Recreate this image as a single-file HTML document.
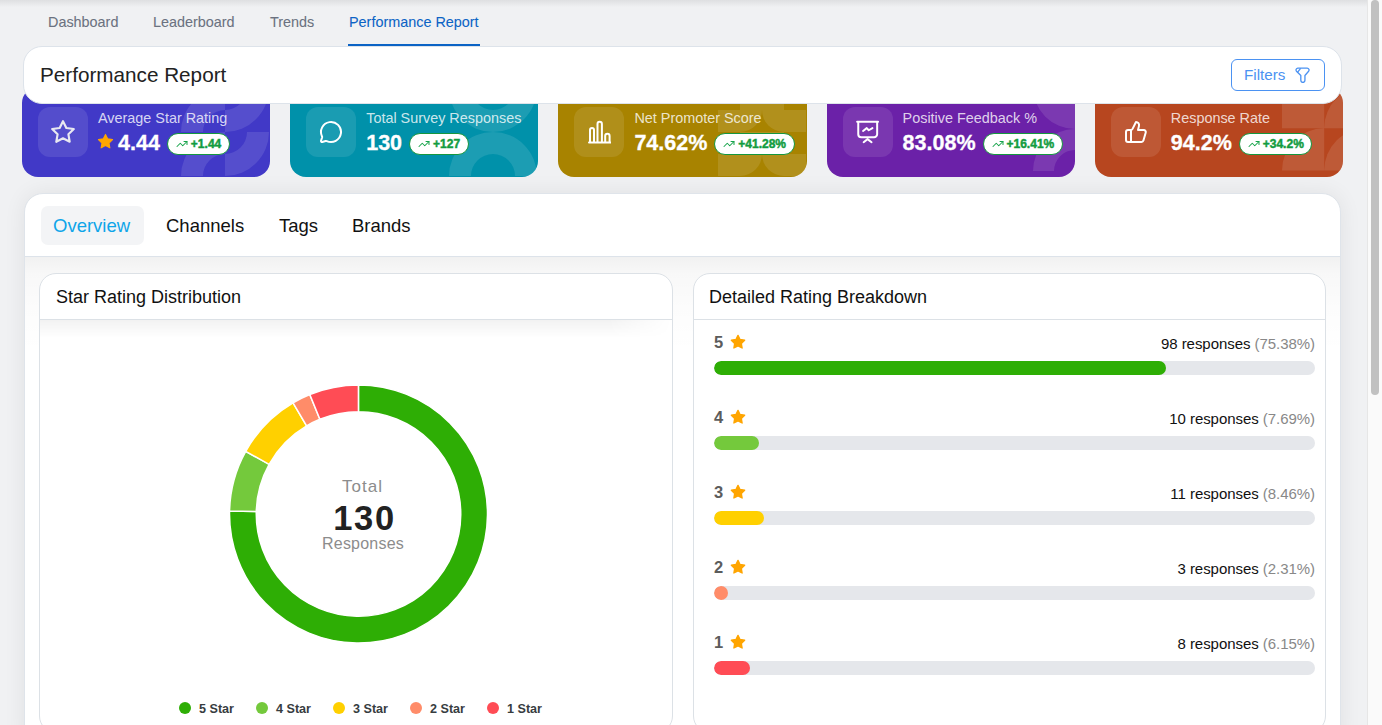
<!DOCTYPE html>
<html><head><meta charset="utf-8">
<style>
*{box-sizing:border-box;margin:0;padding:0}
html,body{width:1382px;height:725px;overflow:hidden}
body{background:#f0f1f3;font-family:"Liberation Sans",sans-serif;position:relative;color:#1f2937}
.abs{position:absolute}
.topshadow{left:0;top:0;width:1367px;height:7px;background:linear-gradient(#dedfe1,rgba(240,241,243,0))}
.nav{top:12px;font-size:14.4px;color:#6b7280;white-space:nowrap;line-height:20px;-webkit-text-stroke:.08px currentColor}
.nav.active{color:#0b63c5}
.underline{left:348px;top:44px;width:132px;height:2px;background:#0b63c5}
.hdr{left:23px;top:46px;width:1319px;height:58px;background:#fff;border:1px solid #dde3ea;border-radius:19px;z-index:5}
.hdr h1{position:absolute;left:16px;top:15.6px;font-size:20.7px;font-weight:400;color:#222;line-height:24px;white-space:nowrap}
.filters{left:1207px;top:12px;width:94px;height:32px;border:1px solid #4b92f2;border-radius:6px;color:#4b92f2;font-size:15.2px;line-height:30px;padding-left:12px}
.filters svg{position:absolute;left:63.2px;top:7px}
.card{top:87px;width:248.2px;height:90px;border-radius:16px;overflow:hidden;z-index:1}
.card .pat{position:absolute;right:1px;bottom:1px}
.ibox{position:absolute;left:16px;top:20px;width:50px;height:50px;border-radius:12px;background:rgba(255,255,255,.1)}
.ibox svg{position:absolute;left:13px;top:13px}
.lbl{position:absolute;left:76px;top:22.5px;font-size:14.4px;letter-spacing:0;line-height:17px;color:rgba(255,255,255,.8);white-space:nowrap}
.val{position:absolute;left:76px;top:44px;height:24px;display:flex;align-items:center;white-space:nowrap}
.val b{font-size:21.5px;color:#fff;line-height:24px;font-weight:700;-webkit-text-stroke:.3px #fff}
.badge{margin-left:7px;margin-top:2px;height:22px;border:1px solid #15973f;border-radius:11px;background:#fff;color:#129c3f;font-weight:700;font-size:12px;display:flex;align-items:center;padding:0 7.5px 0 8px;-webkit-text-stroke:.45px #129c3f}
.badge svg{margin-right:3px}
.ov{left:24px;top:193px;width:1317px;height:560px;background:#fff;border:1px solid #dfe4ea;border-radius:19px;box-shadow:0 0 22px rgba(0,0,0,.07)}
.tabbar{position:absolute;left:0;top:0;width:100%;height:63px;border-bottom:1px solid #dde3ea;border-radius:18px 18px 0 0}
.tabsh{position:absolute;left:0;top:63px;width:100%;height:95px;background:linear-gradient(rgba(0,0,0,.055),rgba(0,0,0,.028) 18%,rgba(0,0,0,.01) 55%,rgba(0,0,0,0))}
.hsh{position:absolute;left:0;top:46px;width:100%;height:18px;background:linear-gradient(rgba(0,0,0,.05),rgba(0,0,0,0));-webkit-mask-image:linear-gradient(to right,#000 90%,transparent)}
.tab{position:absolute;top:12px;height:39px;font-size:18.5px;line-height:39px;color:#111;white-space:nowrap}
.tab.on{left:16px;width:103px;background:#f3f4f6;border-radius:7px;color:#0ea5e9;padding-left:12px}
.pane{position:absolute;top:273px;width:633px;height:460px;background:#fff;border:1px solid #dce1e6;border-radius:17px;}
.pane h2{position:absolute;left:15px;top:12px;font-size:18px;font-weight:400;color:#111;line-height:22px;white-space:nowrap}
.pane .hb{position:absolute;left:0;top:45px;width:100%;height:1px;background:#dce1e6}
.row{position:absolute;left:20px;width:601px}
.row .n{position:absolute;left:0;top:-3px;font-size:16.5px;font-weight:700;color:#5c5c5c;line-height:20px}
.row svg.st{position:absolute;left:16px;top:-1px}
.row .rt{position:absolute;right:0;top:0;font-size:15px;line-height:18px;color:#111;letter-spacing:-.05px;white-space:nowrap}
.row .rt span{color:#888}
.track{position:absolute;left:0;top:26px;width:601px;height:14px;border-radius:7px;background:#e5e7eb;overflow:hidden}
.fill{position:absolute;left:0;top:0;height:14px;border-radius:7px}
.leg{position:absolute;top:701px;font-size:12.6px;font-weight:700;color:#373d3f;line-height:16px;white-space:nowrap}
.leg i{position:absolute;left:-20px;top:1px;width:12px;height:12px;border-radius:6px}
.sb{left:1367px;top:0;width:15px;height:725px;background:#fafafa;border-left:1px solid #e6e6e6;z-index:10}
.thumb{left:1371px;top:0;width:8px;height:395px;border-radius:4px;background:#c1c1c1;z-index:11}
</style></head><body>
<div class="abs topshadow"></div>
<div class="abs nav" style="left:48px">Dashboard</div>
<div class="abs nav" style="left:153px">Leaderboard</div>
<div class="abs nav" style="left:270px">Trends</div>
<div class="abs nav active" style="left:349px">Performance Report</div>
<div class="abs underline"></div>

<div class="abs hdr">
  <h1>Performance Report</h1>
  <div class="abs filters">Filters<svg width="15" height="16" viewBox="0 0 16 17" preserveAspectRatio="none" fill="none" stroke="#4b92f2" stroke-width="1.4" stroke-linejoin="round"><path d="M3 1.2h10a2 2 0 0 1 1.5 3.3L10.6 9v5.2a2.2 2.2 0 0 1-4.4 0V9L1.6 4.5A2 2 0 0 1 3 1.2Z"/><path d="M6 1.4L2.4 6"/></svg></div>
</div>

<!-- card 1 -->
<div class="abs card" style="left:22px;background:#4139c7">
  <svg class="pat" width="88" height="88" viewBox="0 0 88 88" fill="rgba(255,255,255,.11)"><path d="M0 44A44 44 0 0 1 44 0L44 22A22 22 0 0 0 22 44Z"/><path d="M44 22L44 44A44 44 0 0 0 88 0L66 0A22 22 0 0 1 44 22Z"/><path d="M0 88A44 44 0 0 1 44 44L44 66A22 22 0 0 0 22 88Z"/><path d="M44 66L44 88A44 44 0 0 0 88 44L66 44A22 22 0 0 1 44 66Z"/></svg>
  <div class="ibox"><svg style="left:12.2px;top:12.4px" width="26" height="26" viewBox="0 0 24 24" fill="none" stroke="#e8e8f0" stroke-width="2" stroke-linejoin="round"><path d="M12 2l3.09 6.26L22 9.27l-5 4.87 1.18 6.88L12 17.77l-6.18 3.25L7 14.14 2 9.27l6.91-1.01L12 2z"/></svg></div>
  <div class="lbl">Average Star Rating</div>
  <div class="val"><svg width="17" height="17" viewBox="0 0 24 24" style="margin-right:4px;margin-left:-1px;position:relative;top:-1.5px"><path fill="#ffa500" stroke="#ffa500" stroke-width="1.5" stroke-linejoin="round" d="M12 2l3.09 6.26L22 9.27l-5 4.87 1.18 6.88L12 17.77l-6.18 3.25L7 14.14 2 9.27l6.91-1.01L12 2z"/></svg><b>4.44</b><span class="badge"><svg width="12" height="12" viewBox="0 0 24 24" fill="none" stroke="#16a34a" stroke-width="2.05" stroke-linecap="round" stroke-linejoin="round"><path d="M22 7l-8.5 8.5-5-5L2 17"/><path d="M16 7h6v6"/></svg>+1.44</span></div>
</div>
<!-- card 2 -->
<div class="abs card" style="left:290.2px;background:#0091aa">
  <svg class="pat" width="88" height="88" viewBox="0 0 88 88" fill="rgba(255,255,255,.11)"><path d="M0 0A44 44 0 0 0 88 0L66 0A22 22 0 0 1 22 0Z"/><path d="M0 88A44 44 0 0 1 88 88L66 88A22 22 0 0 0 22 88Z"/></svg>
  <div class="ibox"><svg width="24" height="24" viewBox="0 0 24 24" fill="none" stroke="#fff" stroke-width="2" stroke-linecap="round" stroke-linejoin="round"><path d="M2.992 16.342a2 2 0 0 1 .094 1.167l-1.065 3.29a1 1 0 0 0 1.236 1.168l3.413-.998a2 2 0 0 1 1.099.092 10 10 0 1 0-4.777-4.719"/></svg></div>
  <div class="lbl">Total Survey Responses</div>
  <div class="val"><b>130</b><span class="badge"><svg width="12" height="12" viewBox="0 0 24 24" fill="none" stroke="#16a34a" stroke-width="2.05" stroke-linecap="round" stroke-linejoin="round"><path d="M22 7l-8.5 8.5-5-5L2 17"/><path d="M16 7h6v6"/></svg>+127</span></div>
</div>
<!-- card 3 -->
<div class="abs card" style="left:558.4px;background:#a88300">
  <svg class="pat" width="88" height="88" viewBox="0 0 88 88" fill="rgba(255,255,255,.11)"><path d="M22 0h44v22H22Z"/><path d="M0 22h22v22H0Z"/><path d="M66 22h22v22H66Z"/><path d="M22 22h22A22 22 0 0 1 22 44Z"/><path d="M66 22v22A22 22 0 0 1 44 22Z"/><path d="M22 44h44v22H22Z"/><path d="M0 66h22v22H0Z"/><path d="M66 66h22v22H66Z"/><path d="M22 66h22A22 22 0 0 1 22 88Z"/><path d="M66 66v22A22 22 0 0 1 44 66Z"/></svg>
  <div class="ibox"><svg width="24" height="24" viewBox="0 0 24 24" fill="none" stroke="#fff" stroke-width="2" stroke-linecap="round" stroke-linejoin="round"><path d="M3 22V10a2 2 0 0 1 4 0v12"/><path d="M10.5 22V4a2.2 2.2 0 0 1 4.4 0v18"/><path d="M18.2 22v-6a2.2 2.2 0 0 1 4.4 0v6"/><path d="M2 22.6h21.5"/></svg></div>
  <div class="lbl">Net Promoter Score</div>
  <div class="val"><b>74.62%</b><span class="badge"><svg width="12" height="12" viewBox="0 0 24 24" fill="none" stroke="#16a34a" stroke-width="2.05" stroke-linecap="round" stroke-linejoin="round"><path d="M22 7l-8.5 8.5-5-5L2 17"/><path d="M16 7h6v6"/></svg>+41.28%</span></div>
</div>
<!-- card 4 -->
<div class="abs card" style="left:826.6px;background:#6b21a8">
  <svg class="pat" style="right:0;bottom:6px" width="84" height="84" viewBox="0 0 84 84" fill="rgba(255,255,255,.11)"><path d="M84 0V42A42 42 0 0 1 42 0Z"/><path d="M42 84A42 42 0 0 1 84 42V63A21 21 0 0 0 63 84Z"/></svg>
  <div class="ibox"><svg width="24" height="24" viewBox="0 0 24 24" fill="none" stroke="#fff" stroke-width="2" stroke-linecap="round" stroke-linejoin="round"><path d="M1.15 1.85h20.9"/><path d="M2.25 2v12.15a3 3 0 0 0 3 3h12.9a3 3 0 0 0 3-3V2"/><path d="M7.65 22.25l3.9-3.1 4 3.1"/><path d="M7.05 11l3.7-2.85 2 2.1 3.7-2.1"/></svg></div>
  <div class="lbl">Positive Feedback %</div>
  <div class="val"><b>83.08%</b><span class="badge"><svg width="12" height="12" viewBox="0 0 24 24" fill="none" stroke="#16a34a" stroke-width="2.05" stroke-linecap="round" stroke-linejoin="round"><path d="M22 7l-8.5 8.5-5-5L2 17"/><path d="M16 7h6v6"/></svg>+16.41%</span></div>
</div>
<!-- card 5 -->
<div class="abs card" style="left:1094.8px;background:#b7461f">
  <svg class="pat" style="right:-23.2px;bottom:6.4px" width="84.4" height="84.4" viewBox="0 0 84 84" fill="rgba(255,255,255,.11)"><path d="M0 0h42v42H0Z"/><path d="M42 42A42 42 0 0 1 84 0V42Z"/><path d="M0 84A42 42 0 0 1 42 42V84Z"/><path d="M42 84A42 42 0 0 1 84 42V84Z"/></svg>
  <div class="ibox"><svg width="24" height="24" viewBox="0 0 24 24" fill="none" stroke="#fff" stroke-width="2" stroke-linecap="round" stroke-linejoin="round"><path d="M7 10v12"/><path d="M15 5.88L14 10h5.83a2 2 0 0 1 1.92 2.56l-2.33 8A2 2 0 0 1 17.5 22H4a2 2 0 0 1-2-2v-8a2 2 0 0 1 2-2h2.76a2 2 0 0 0 1.79-1.11L12 2a3.13 3.13 0 0 1 3 3.88Z"/></svg></div>
  <div class="lbl">Response Rate</div>
  <div class="val"><b>94.2%</b><span class="badge"><svg width="12" height="12" viewBox="0 0 24 24" fill="none" stroke="#16a34a" stroke-width="2.05" stroke-linecap="round" stroke-linejoin="round"><path d="M22 7l-8.5 8.5-5-5L2 17"/><path d="M16 7h6v6"/></svg>+34.2%</span></div>
</div>

<div class="abs ov">
  <div class="tabbar">
    <div class="tab on">Overview</div>
    <div class="tab" style="left:141px">Channels</div>
    <div class="tab" style="left:254px">Tags</div>
    <div class="tab" style="left:327px">Brands</div>
  </div>
  <div class="tabsh"></div>
</div>

<!-- left pane -->
<div class="pane" style="left:39px;width:634px">
  <h2 style="left:16px">Star Rating Distribution</h2>
  <div class="hb"></div>
  <div class="hsh"></div>
</div>
<svg class="abs" style="left:0;top:0;z-index:3" width="1382" height="725">
<path d="M358.50 385.00A129 129 0 1 1 229.54 510.92L256.28 511.56A102.25 102.25 0 1 0 358.50 411.75Z" fill="#2eae05" stroke="#fff" stroke-width="1.5"/>
<path d="M229.54 510.92A129 129 0 0 1 245.73 451.36L269.12 464.35A102.25 102.25 0 0 0 256.28 511.56Z" fill="#74c93c" stroke="#fff" stroke-width="1.5"/>
<path d="M245.73 451.36A129 129 0 0 1 293.04 402.84L306.62 425.89A102.25 102.25 0 0 0 269.12 464.35Z" fill="#ffd000" stroke="#fff" stroke-width="1.5"/>
<path d="M293.04 402.84A129 129 0 0 1 309.81 394.54L319.91 419.31A102.25 102.25 0 0 0 306.62 425.89Z" fill="#ff8c69" stroke="#fff" stroke-width="1.5"/>
<path d="M309.81 394.54A129 129 0 0 1 358.42 385.00L358.44 411.75A102.25 102.25 0 0 0 319.91 419.31Z" fill="#ff4c55" stroke="#fff" stroke-width="1.5"/>
<text x="362.5" y="492" text-anchor="middle" font-family="Liberation Sans" font-size="17" fill="#8c8c8c" letter-spacing="1">Total</text>
<text x="364.5" y="530" text-anchor="middle" font-family="Liberation Sans" font-size="34.5" font-weight="700" fill="#222" letter-spacing="1.6">130</text>
<text x="363" y="549" text-anchor="middle" font-family="Liberation Sans" font-size="16" fill="#8c8c8c" letter-spacing="0.22">Responses</text>
</svg>
<div class="leg" style="left:199px"><i style="background:#2eae05"></i>5 Star</div>
<div class="leg" style="left:276px"><i style="background:#74c93c"></i>4 Star</div>
<div class="leg" style="left:353px"><i style="background:#ffd000"></i>3 Star</div>
<div class="leg" style="left:430px"><i style="background:#ff8c69"></i>2 Star</div>
<div class="leg" style="left:507px"><i style="background:#ff4c55"></i>1 Star</div>

<!-- right pane -->
<div class="pane" style="left:693px">
  <h2>Detailed Rating Breakdown</h2>
  <div class="hb"></div>
  <div class="row" style="top:61px"><div class="n">5</div><svg class="st" width="16" height="16" viewBox="0 0 24 24"><path fill="#ffa500" stroke="#ffa500" stroke-width="2" stroke-linejoin="round" d="M12 2l3.09 6.26L22 9.27l-5 4.87 1.18 6.88L12 17.77l-6.18 3.25L7 14.14 2 9.27l6.91-1.01L12 2z"/></svg><div class="rt">98 responses <span>(75.38%)</span></div><div class="track"><div class="fill" style="width:452px;background:#2eae05"></div></div></div>
  <div class="row" style="top:136px"><div class="n">4</div><svg class="st" width="16" height="16" viewBox="0 0 24 24"><path fill="#ffa500" stroke="#ffa500" stroke-width="2" stroke-linejoin="round" d="M12 2l3.09 6.26L22 9.27l-5 4.87 1.18 6.88L12 17.77l-6.18 3.25L7 14.14 2 9.27l6.91-1.01L12 2z"/></svg><div class="rt">10 responses <span>(7.69%)</span></div><div class="track"><div class="fill" style="width:45px;background:#74c93c"></div></div></div>
  <div class="row" style="top:211px"><div class="n">3</div><svg class="st" width="16" height="16" viewBox="0 0 24 24"><path fill="#ffa500" stroke="#ffa500" stroke-width="2" stroke-linejoin="round" d="M12 2l3.09 6.26L22 9.27l-5 4.87 1.18 6.88L12 17.77l-6.18 3.25L7 14.14 2 9.27l6.91-1.01L12 2z"/></svg><div class="rt">11 responses <span>(8.46%)</span></div><div class="track"><div class="fill" style="width:50px;background:#ffd000"></div></div></div>
  <div class="row" style="top:286px"><div class="n">2</div><svg class="st" width="16" height="16" viewBox="0 0 24 24"><path fill="#ffa500" stroke="#ffa500" stroke-width="2" stroke-linejoin="round" d="M12 2l3.09 6.26L22 9.27l-5 4.87 1.18 6.88L12 17.77l-6.18 3.25L7 14.14 2 9.27l6.91-1.01L12 2z"/></svg><div class="rt">3 responses <span>(2.31%)</span></div><div class="track"><div class="fill" style="width:14px;background:#ff8c69"></div></div></div>
  <div class="row" style="top:361px"><div class="n">1</div><svg class="st" width="16" height="16" viewBox="0 0 24 24"><path fill="#ffa500" stroke="#ffa500" stroke-width="2" stroke-linejoin="round" d="M12 2l3.09 6.26L22 9.27l-5 4.87 1.18 6.88L12 17.77l-6.18 3.25L7 14.14 2 9.27l6.91-1.01L12 2z"/></svg><div class="rt">8 responses <span>(6.15%)</span></div><div class="track"><div class="fill" style="width:36px;background:#ff4c55"></div></div></div>
</div>

<div class="abs sb"></div>
<div class="abs thumb"></div>
</body></html>
